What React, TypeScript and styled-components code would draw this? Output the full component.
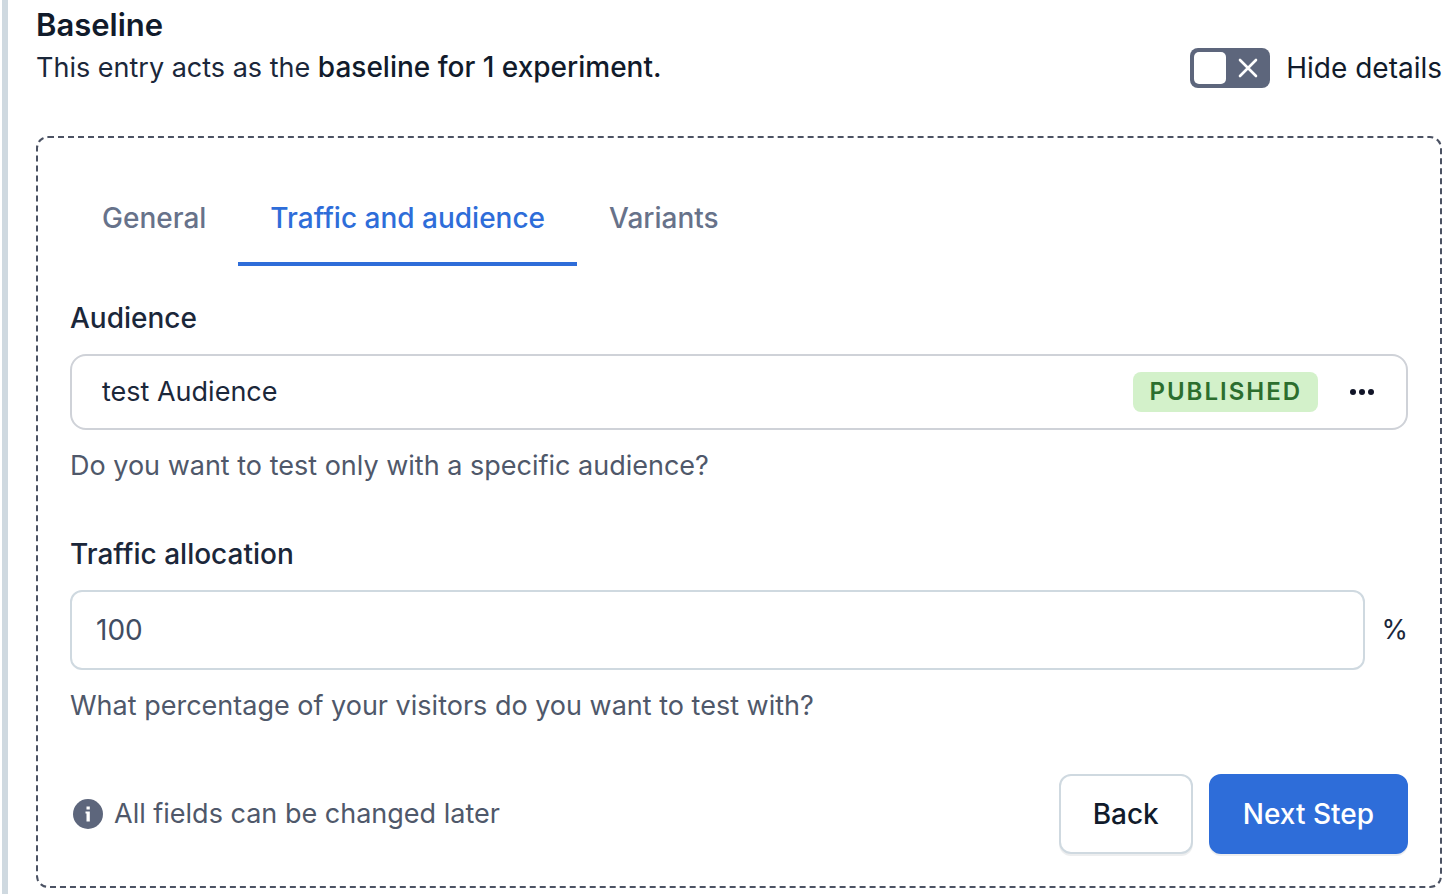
import React, { useState } from "react";
import styled, { createGlobalStyle } from "styled-components";

const Global = createGlobalStyle`
  * { box-sizing: border-box; }
  body {
    margin: 0;
    background: #fff;
    color: #1b273a;
    font-family: Inter, "Liberation Sans", sans-serif;
    font-size: 27px;
    line-height: 40px;
  }
  button, input { font: inherit; }
`;

const Page = styled.main`
  min-height: 100vh;
  margin-left: 2px;
  padding: 4px 8px 6px 28px;
  border-left: 6px solid #cfd9e0;
`;

const Title = styled.h1`
  margin: 0;
  color: #111b2b;
  font-size: 31px;
  font-weight: 600;
  line-height: 42px;
`;

const Intro = styled.div`
  display: flex;
  justify-content: space-between;
  align-items: center;
  margin: 2px 0 48px;
`;

const Text = styled.p`
  margin: 0;
`;

const Strong = styled.strong`
  color: #111b2b;
  font-size: 28px;
  font-weight: 500;
  line-height: 32px;
`;

const Switch = styled.label`
  position: relative;
  display: flex;
  align-items: center;
  gap: 16px;
  color: #111b2b;
  font-size: 28px;
  cursor: pointer;
`;

const SwitchInput = styled.input`
  position: absolute;
  inset: 0;
  margin: 0;
  opacity: 0;
  cursor: pointer;
`;

const Track = styled.span<{ $on: boolean }>`
  display: flex;
  flex-direction: ${(p) => (p.$on ? "row-reverse" : "row")};
  justify-content: space-between;
  align-items: center;
  width: 80px;
  height: 40px;
  padding: 4px;
  border-radius: 8px;
  background: ${(p) => (p.$on ? "#2e6dd9" : "#5d667c")};
`;

const Thumb = styled.span`
  width: 32px;
  height: 32px;
  border-radius: 5px;
  background: #fff;
`;

const Panel = styled.section`
  padding: 32px;
  border: 2px dashed #4b5263;
  border-radius: 12px;
`;

const Tabs = styled.div`
  display: flex;
  margin-bottom: 32px;
`;

const Tab = styled.button<{ $active?: boolean }>`
  height: 96px;
  padding: 0 32px;
  border: 0;
  background: none;
  box-shadow: ${(p) => (p.$active ? "inset 0 -4px #2e6dd9" : "none")};
  color: ${(p) => (p.$active ? "#2e6dd9" : "#67728a")};
  font-size: 28px;
  font-weight: 500;
  cursor: pointer;
`;

const Field = styled.div`
  display: flex;
  flex-direction: column;
  gap: 16px;
  margin-bottom: 48px;
`;

const Label = styled.label`
  color: #1b273a;
  font-size: 28px;
  font-weight: 500;
`;

const Card = styled.div`
  display: flex;
  align-items: center;
  height: 76px;
  padding: 0 30px;
  border: 2px solid #cfd2d8;
  border-radius: 16px;
`;

const Badge = styled.span`
  margin-left: auto;
  padding: 0 16px;
  border-radius: 8px;
  background: #d3f1ca;
  color: #2c6e2e;
  font-size: 24px;
  font-weight: 600;
  letter-spacing: 2px;
`;

const More = styled.button`
  display: flex;
  margin-left: 30px;
  padding: 0;
  border: 0;
  background: none;
  cursor: pointer;
`;

const Row = styled.div`
  display: flex;
  align-items: center;
  gap: 16px;
`;

const Input = styled.input`
  flex: 1;
  min-width: 0;
  height: 80px;
  padding: 0 24px;
  border: 2px solid #cfd9e0;
  border-radius: 12px;
  background: #fff;
  color: #414d63;
  font-size: 28px;
`;

const Help = styled.p`
  margin: 0;
  color: #4f586a;
`;

const Footer = styled.footer`
  display: flex;
  align-items: center;
  gap: 16px;
`;

const Note = styled.p`
  display: flex;
  align-items: center;
  gap: 8px;
  margin: 0 auto 0 0;
  color: #4f586a;
`;

const Button = styled.button<{ $primary?: boolean }>`
  height: 80px;
  padding: 0 32px;
  border: 2px solid ${(p) => (p.$primary ? "#2e6dd9" : "#cfd9e0")};
  border-radius: 12px;
  background: ${(p) => (p.$primary ? "#2e6dd9" : "#fff")};
  box-shadow: 0 2px 0 rgba(25, 37, 50, 0.08);
  color: ${(p) => (p.$primary ? "#fff" : "#111b2b")};
  font-size: 28px;
  font-weight: 500;
  cursor: pointer;
`;

const CrossIcon = () => (
  <svg width="36" height="32" viewBox="0 0 36 32" fill="none" stroke="#fff" strokeWidth="2.6" strokeLinecap="round" aria-hidden="true">
    <path d="M10 8l16 16M26 8L10 24" />
  </svg>
);

const DotsIcon = () => (
  <svg width="28" height="8" viewBox="0 0 28 8" fill="#111528" aria-hidden="true">
    <circle cx="5" cy="4" r="3" />
    <circle cx="14" cy="4" r="3" />
    <circle cx="23" cy="4" r="3" />
  </svg>
);

const InfoIcon = () => (
  <svg width="36" height="36" viewBox="0 0 36 36" aria-hidden="true">
    <circle cx="18" cy="18" r="15" fill="#5d667c" />
    <path d="M16.500 10.500h3.300v3h-3.300zM15.500 15.500h4.300v10h-3.300v-8h-1z" fill="#fff" />
  </svg>
);

const tabs = ["General", "Traffic and audience", "Variants"];

export default function App() {
  const [active, setActive] = useState(tabs[1]);
  const [hidden, setHidden] = useState(false);
  const [traffic, setTraffic] = useState("100");

  return (
    <Page>
      <Global />
      <Title>Baseline</Title>
      <Intro>
        <Text>
          This entry acts as the <Strong>baseline for 1 experiment.</Strong>
        </Text>
        <Switch>
          <SwitchInput type="checkbox" role="switch" checked={hidden} onChange={(e) => setHidden(e.target.checked)} />
          <Track $on={hidden}>
            <Thumb />
            <CrossIcon />
          </Track>
          Hide details
        </Switch>
      </Intro>
      <Panel>
        <Tabs role="tablist">
          {tabs.map((name) => (
            <Tab key={name} type="button" role="tab" aria-selected={name === active} $active={name === active} onClick={() => setActive(name)}>
              {name}
            </Tab>
          ))}
        </Tabs>
        <Field role="group" aria-labelledby="audience-label">
          <Label as="span" id="audience-label">Audience</Label>
          <Card>
            test Audience
            <Badge>PUBLISHED</Badge>
            <More type="button" aria-label="Actions">
              <DotsIcon />
            </More>
          </Card>
          <Help>Do you want to test only with a specific audience?</Help>
        </Field>
        <Field>
          <Label htmlFor="traffic">Traffic allocation</Label>
          <Row>
            <Input id="traffic" type="text" inputMode="numeric" aria-describedby="traffic-help" value={traffic} onChange={(e) => setTraffic(e.target.value)} />
            <span>%</span>
          </Row>
          <Help id="traffic-help">What percentage of your visitors do you want to test with?</Help>
        </Field>
        <Footer>
          <Note>
            <InfoIcon />
            All fields can be changed later
          </Note>
          <Button type="button">Back</Button>
          <Button type="button" $primary>Next Step</Button>
        </Footer>
      </Panel>
    </Page>
  );
}
